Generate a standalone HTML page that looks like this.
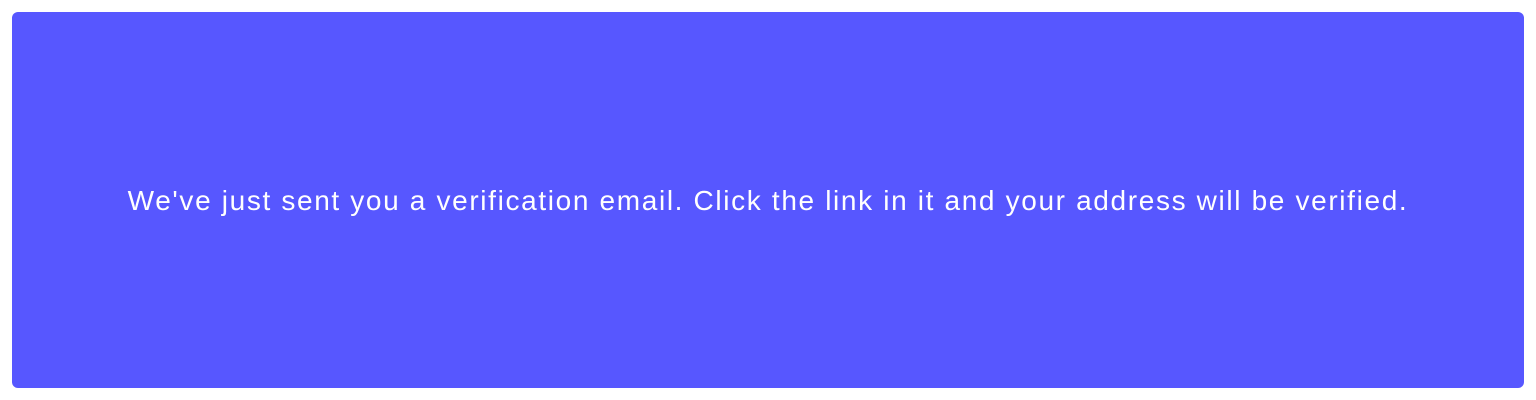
<!DOCTYPE html>
<html><head><style>
html,body{margin:0;padding:0;background:#fff;width:1536px;height:400px;overflow:hidden}
.box{position:absolute;left:12px;top:12px;width:1512px;height:376px;background:#5757FF;border-radius:6px;display:flex;align-items:center;justify-content:center}
.t{font-family:"Liberation Sans",sans-serif;font-size:28px;color:#fff;letter-spacing:1.65px;word-spacing:0px;white-space:nowrap;margin-top:2px}
</style></head><body>
<div class="box"><div class="t">We've just sent you a verification email. Click the link in it and your address will be verified.</div></div>
</body></html>
